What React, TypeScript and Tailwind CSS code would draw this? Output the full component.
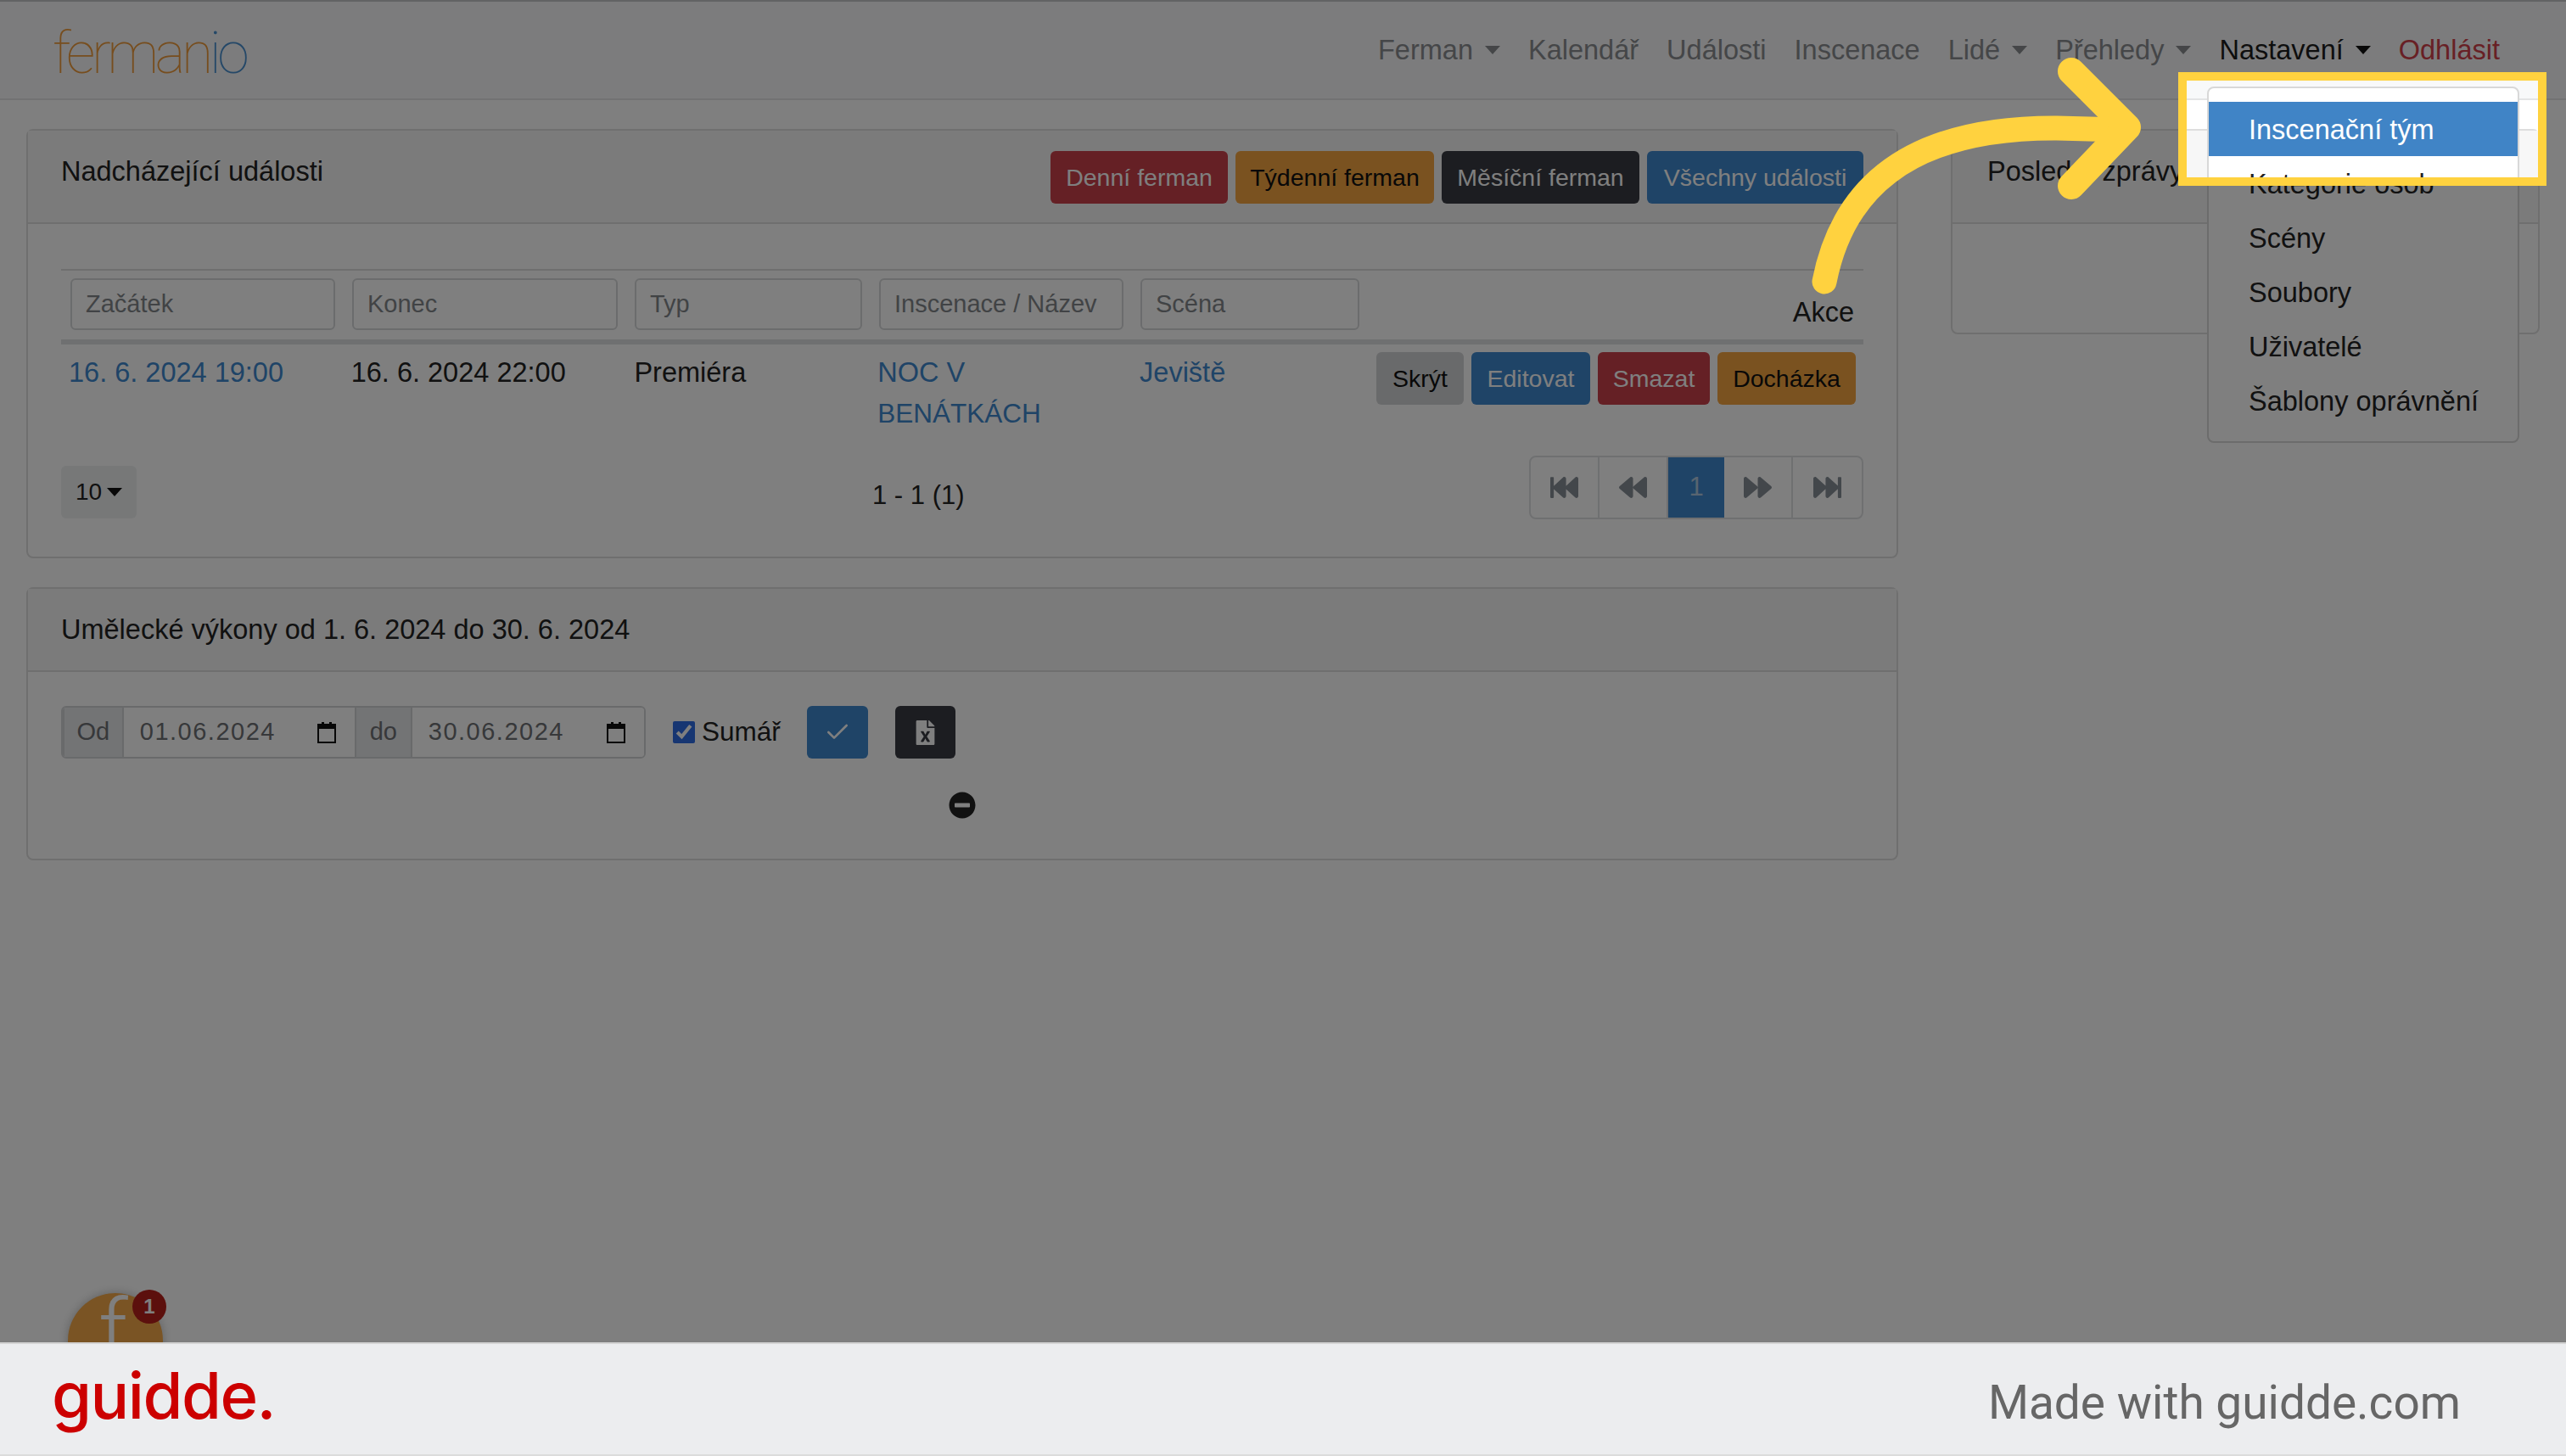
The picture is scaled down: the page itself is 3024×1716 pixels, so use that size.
import { Check } from "lucide-react";
import { FaBackward, FaFastBackward, FaFastForward, FaFileExcel, FaForward, FaMinusCircle } from "react-icons/fa";

const SANS = "font-['Liberation_Sans',Arial,sans-serif]";

function Caret({ className = "border-t-[#7a7d80]" }: { className?: string }) {
  return <span className={`inline-block h-0 w-0 border-x-[9px] border-t-[10px] border-x-transparent ${className}`} />;
}

function NavItem({ label, caret, active }: { label: string; caret?: boolean; active?: boolean }) {
  return (
    <span className={`flex items-center gap-[14px] ${active ? "text-[#1c1c1c]" : "text-[#8a8d90]"}`}>
      {label}
      {caret && <Caret className={active ? "border-t-[#111111]" : "border-t-[#8a8d90]"} />}
    </span>
  );
}

function Navbar() {
  return (
    <header className="flex h-[118px] shrink-0 items-center justify-between border-y-2 border-t-[#c4c6c8] border-b-[#e4e5e6] bg-[#f8f9fa] pl-[62px] pr-[78px] text-[32.5px]">
      <span className="mt-[8px] font-['Roboto',sans-serif] text-[68px] leading-none font-thin tracking-[-4.5px] text-[#ee9b3c]">
        ferman<span className="text-[#4a90d0]">io</span>
      </span>
      <nav className="flex items-center gap-[33px]">
        <NavItem label="Ferman" caret />
        <NavItem label="Kalendář" />
        <NavItem label="Události" />
        <NavItem label="Inscenace" />
        <NavItem label="Lidé" caret />
        <NavItem label="Přehledy" caret />
        <NavItem label="Nastavení" caret active />
        <span className="text-[#d0404a]">Odhlásit</span>
      </nav>
    </header>
  );
}

function Btn({ label, color, width }: { label: string; color: string; width: string }) {
  return (
    <span className={`flex h-[62px] items-center justify-center rounded-[6px] text-[28.5px] whitespace-nowrap ${width} ${color}`}>
      {label}
    </span>
  );
}

function FilterInput({ placeholder, width }: { placeholder: string; width: string }) {
  return (
    <input
      readOnly
      placeholder={placeholder}
      className={`h-[61px] rounded-[6px] border-2 border-[#d6d8da] bg-white px-[16px] text-[29px] outline-none placeholder:text-[#83878b] ${width}`}
    />
  );
}

function PageCell({ children, active, width }: { children: React.ReactNode; active?: boolean; width: string }) {
  return (
    <span
      className={`flex h-full items-center justify-center ${width} ${
        active ? "bg-[#3e88ce] text-[#b0c8e0]" : "border-r-2 border-[#dfe1e3] text-[#868e96] last:border-r-0"
      }`}
    >
      {children}
    </span>
  );
}

function EventsCard() {
  return (
    <section className="h-[506px] rounded-[8px] border-2 border-[#dedede]">
      <div className="flex h-[110px] justify-between border-b-2 border-[#dedede] bg-[#f7f7f7] pt-[24px] pr-[39px] pl-[39px]">
        <h2 className="text-[32.5px] leading-[48px] text-[#222222]">Nadcházející události</h2>
        <div className="flex gap-[9px]">
          <Btn label="Denní ferman" width="w-[209px]" color="bg-[#ca404a] text-white" />
          <Btn label="Týdenní ferman" width="w-[234px]" color="bg-[#f4a440] text-[#111111]" />
          <Btn label="Měsíční ferman" width="w-[233px]" color="bg-[#383a42] text-white" />
          <Btn label="Všechny události" width="w-[255px]" color="bg-[#3e88ce] text-white" />
        </div>
      </div>
      <div className="px-[39px] pt-[53px]">
        <div className="relative flex h-[89px] gap-[20px] border-t-2 border-b-[6px] border-t-[#dedede] border-b-[#dfe1e3] px-[11px] pt-[9px]">
          <FilterInput placeholder="Začátek" width="w-[312px]" />
          <FilterInput placeholder="Konec" width="w-[313px]" />
          <FilterInput placeholder="Typ" width="w-[268px]" />
          <FilterInput placeholder="Inscenace / Název" width="w-[288px]" />
          <FilterInput placeholder="Scéna" width="w-[258px]" />
          <span className="ml-auto self-end pb-[8px] text-[32.5px] leading-[48px] text-[#222222]">Akce</span>
        </div>
        <div className="flex h-[131px] gap-[20px] px-[9px] pt-[9px] text-[32.5px] leading-[48px] text-[#222222]">
          <a className="w-[314px] text-[#3e88ce]">16. 6. 2024 19:00</a>
          <span className="w-[315px]">16. 6. 2024 22:00</span>
          <span className="w-[268px]">Premiéra</span>
          <a className="w-[290px] text-[#3e88ce]">
            NOC V
            <br />
            <span className="text-[31.5px]">BENÁTKÁCH</span>
          </a>
          <a className="w-[260px] text-[#3e88ce]">Jeviště</a>
          <div className="flex gap-[9px]">
            <Btn label="Skrýt" width="w-[103px]" color="bg-[#d2d4d6] text-[#111111]" />
            <Btn label="Editovat" width="w-[140px]" color="bg-[#3e88ce] text-white" />
            <Btn label="Smazat" width="w-[132px]" color="bg-[#ca404a] text-white" />
            <Btn label="Docházka" width="w-[163px]" color="bg-[#f4a440] text-[#111111]" />
          </div>
        </div>
        <div className="flex items-start">
          <span className="mt-[12px] flex h-[62px] w-[89px] items-center justify-center gap-[6px] rounded-[6px] bg-[#eef0f1] text-[28px] text-[#222222]">
            10 <Caret className="border-t-[#111111]" />
          </span>
          <span className="mt-[23px] ml-[867px] text-[31px] leading-[48px] text-[#222222]">1 - 1 (1)</span>
          <div className="ml-auto flex h-[75px] overflow-hidden rounded-[8px] border-2 border-[#dfe1e3]">
            <PageCell width="w-[81px]"><FaFastBackward size={33} /></PageCell>
            <PageCell width="w-[81px]"><FaBackward size={33} /></PageCell>
            <PageCell active width="w-[66px]"><span className="text-[31px]">1</span></PageCell>
            <PageCell width="w-[81px]"><FaForward size={33} /></PageCell>
            <PageCell width="w-[81px]"><FaFastForward size={33} /></PageCell>
          </div>
        </div>
      </div>
    </section>
  );
}

function CalendarIcon() {
  return (
    <svg width="22" height="25" viewBox="0 0 22 25" className="shrink-0">
      <path d="M1 3h20v21H1z" fill="none" stroke="#111111" strokeWidth="2" />
      <path d="M1 3h20v5H1z" fill="#111111" />
      <path d="M5 0h3v4H5zM14 0h3v4h-3z" fill="#111111" />
    </svg>
  );
}

function DateField({ value, width }: { value: string; width: string }) {
  return (
    <span className={`flex items-center justify-between bg-white pr-[22px] pl-[19px] tracking-[1.5px] text-[#6e7175] ${width}`}>
      {value}
      <CalendarIcon />
    </span>
  );
}

function RangeLabel({ label, width }: { label: string; width: string }) {
  return (
    <span className={`flex items-center justify-center border-x-2 border-[#d2d4d6] bg-[#e6e8ea] text-[#6e7175] ${width}`}>
      {label}
    </span>
  );
}

function PerformanceCard() {
  return (
    <section className="mt-[34px] h-[322px] rounded-[8px] border-2 border-[#dedede]">
      <div className="h-[98px] border-b-2 border-[#dedede] bg-[#f7f7f7] px-[39px] pt-[24px] text-[32.5px] leading-[48px] text-[#222222]">
        Umělecké výkony od 1. 6. 2024 do 30. 6. 2024
      </div>
      <div className="px-[39px] pt-[40px]">
        <div className="flex h-[62px] items-center">
          <div className="flex h-[62px] w-[689px] overflow-hidden rounded-[6px] border-2 border-[#d2d4d6] text-[29px]">
            <RangeLabel label="Od" width="w-[72px]" />
            <DateField value="01.06.2024" width="w-[273px]" />
            <RangeLabel label="do" width="w-[68px]" />
            <DateField value="30.06.2024" width="w-[274px]" />
          </div>
          <input type="checkbox" readOnly checked className="ml-[32px] h-[26px] w-[26px] accent-[#2f6ce5]" />
          <span className="ml-[8px] text-[31.5px] text-[#222222]">Sumář</span>
          <span className="ml-[31px] flex h-[62px] w-[72px] items-center justify-center rounded-[6px] bg-[#3e88ce] text-white">
            <Check size={32} strokeWidth={2} />
          </span>
          <span className="ml-[32px] flex h-[62px] w-[71px] items-center justify-center rounded-[6px] bg-[#383a42] text-white">
            <FaFileExcel size={29} />
          </span>
        </div>
        <div className="mt-[39px] flex justify-center text-[#222222]">
          <FaMinusCircle size={32} />
        </div>
      </div>
    </section>
  );
}

function MessagesCard() {
  return (
    <section className="h-[242px] w-[694px] shrink-0 rounded-[8px] border-2 border-[#dedede]">
      <div className="h-[110px] border-b-2 border-[#dedede] bg-[#f7f7f7] px-[41px] pt-[24px] text-[32.5px] leading-[48px] text-[#222222]">
        Poslední zprávy
      </div>
    </section>
  );
}

function SettingsMenu() {
  const items = ["Inscenační tým", "Kategorie osob", "Scény", "Soubory", "Uživatelé", "Šablony oprávnění"];
  return (
    <div className="absolute top-[102px] left-[2601px] z-[5] w-[368px] rounded-[8px] border-2 border-[#d8d8d8] bg-white py-[16px] text-[32.5px] text-[#222222]">
      {items.map((item, i) => (
        <div key={item} className={`flex h-[64px] items-center pt-[2px] pl-[47px] whitespace-nowrap ${i === 0 ? "bg-[#4084c6] text-white" : ""}`}>
          {item}
        </div>
      ))}
    </div>
  );
}

function Callout() {
  return (
    <>
      <div className="absolute top-[85px] left-[2567px] z-10 h-[134px] w-[434px] border-[10px] border-[#ffd23f] shadow-[0_0_0_4000px_rgba(0,0,0,0.5)]" />
      <svg className="absolute top-0 left-0 z-20" width="3024" height="400" viewBox="0 0 3024 400" fill="none">
        <path
          d="M2150 332C2170 230 2240 150 2424 151L2500 153"
          stroke="#ffd23f"
          strokeWidth="29"
          strokeLinecap="round"
        />
        <path
          d="M2441 84L2507 150L2441 219"
          stroke="#ffd23f"
          strokeWidth="32"
          strokeLinecap="round"
          strokeLinejoin="round"
        />
      </svg>
    </>
  );
}

function ChatBubble() {
  return (
    <div className="absolute top-[1524px] left-[80px] h-[112px] w-[112px] rounded-full bg-[#f4a848] shadow-[0_0_12px_rgba(0,0,0,0.25)]">
      <span className="absolute top-[-6px] left-[36px] font-['Roboto',sans-serif] text-[104px] leading-none font-light text-white">f</span>
      <span className="absolute -top-[4px] left-[76px] flex h-[40px] w-[40px] items-center justify-center rounded-full bg-[#b8201a] text-[24px] font-bold text-white">
        1
      </span>
    </div>
  );
}

function Footer() {
  return (
    <footer className="relative z-30 flex h-[134px] shrink-0 items-center justify-between border-y-2 border-t-[#d4d4d4] border-b-[#dcdcdc] bg-[#ecedef] pr-[124px] pl-[61px]">
      <span className="-mt-[10px] font-['Inter',sans-serif] text-[76px] leading-none font-medium tracking-[-1.5px] text-[#cc0000]">guidde.</span>
      <span className="mt-[8px] font-['Roboto',sans-serif] text-[55px] text-[#666666]">Made with guidde.com</span>
    </footer>
  );
}

export default function App() {
  return (
    <div className={`relative flex h-[1716px] w-[3024px] flex-col overflow-hidden bg-white ${SANS}`}>
      <div className="relative flex-1 overflow-hidden">
        <Navbar />
        <main className="flex gap-[62px] pt-[34px] pl-[31px]">
          <div className="w-[2206px] shrink-0">
            <EventsCard />
            <PerformanceCard />
          </div>
          <MessagesCard />
        </main>
        <ChatBubble />
        <SettingsMenu />
        <Callout />
      </div>
      <Footer />
    </div>
  );
}
